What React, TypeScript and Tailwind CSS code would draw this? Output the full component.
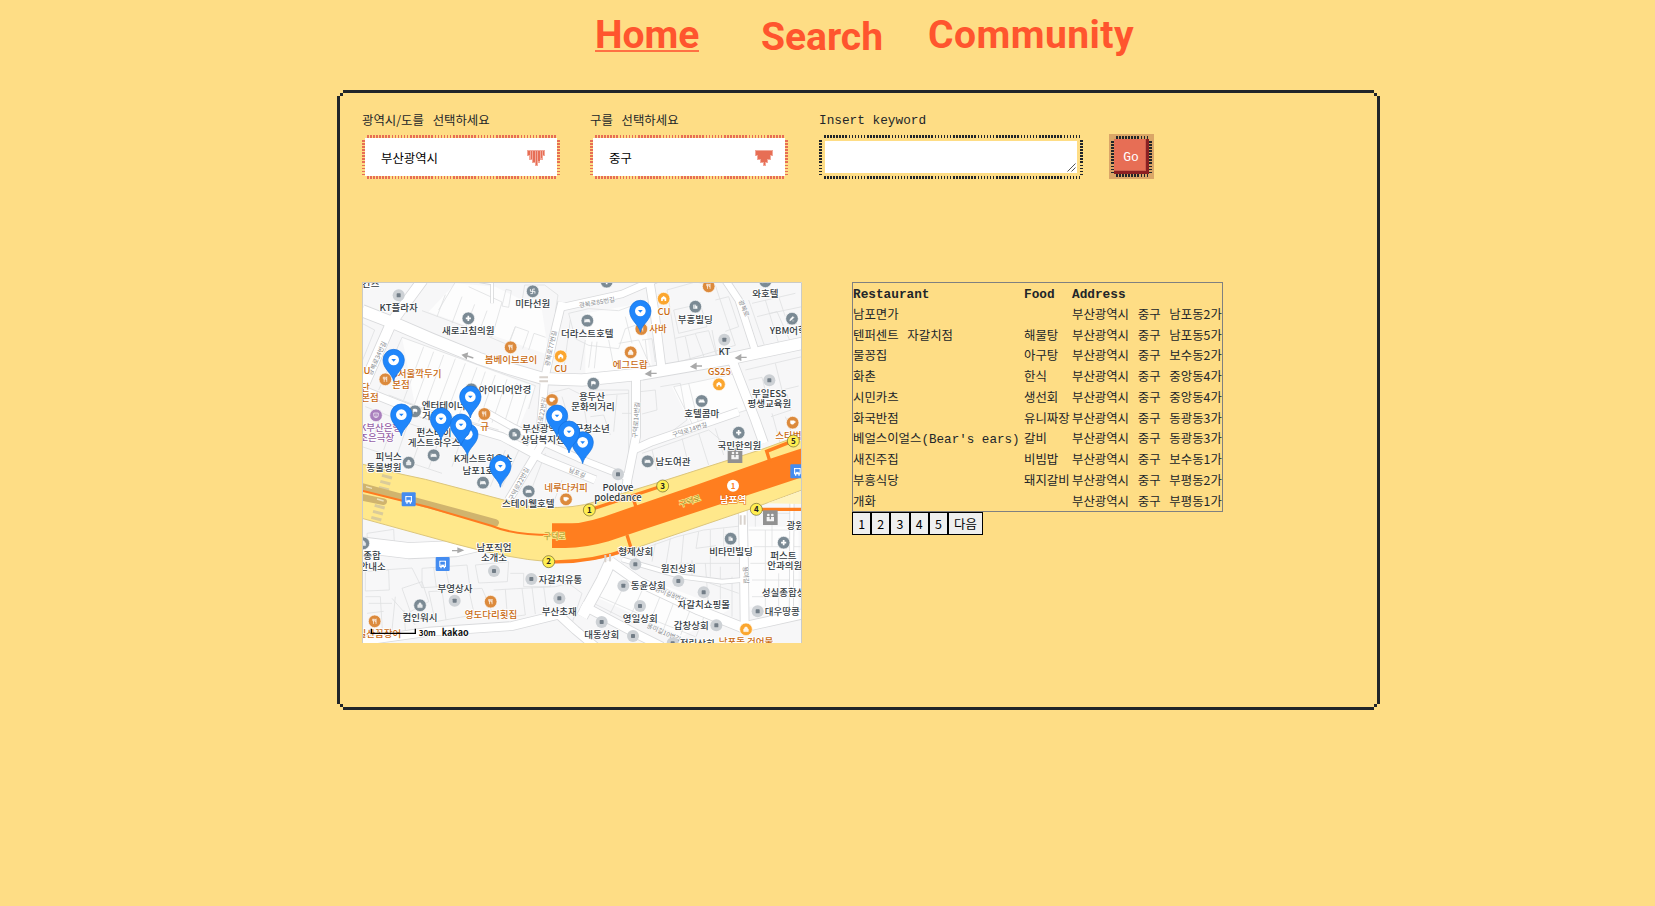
import React from "react";

const ticksX =
  "bg-[repeating-linear-gradient(90deg,currentColor_0,currentColor_1.57px,transparent_1.57px,transparent_3.071px)]";
const ticksY =
  "bg-[repeating-linear-gradient(180deg,currentColor_0,currentColor_1.57px,transparent_1.57px,transparent_3.071px)]";

function TickFrame({ className, children }: { className: string; children?: React.ReactNode }) {
  return (
    <div className={`grid grid-cols-[3px_minmax(0,1fr)_3px] grid-rows-[3px_minmax(0,1fr)_3px] ${className}`}>
      <i />
      <i className={`ml-0.5 ${ticksX}`} />
      <i />
      <i className={`mt-0.5 ${ticksY}`} />
      <div className="flex min-w-0">{children}</div>
      <i className={`mt-0.5 ${ticksY}`} />
      <i />
      <i className={`ml-0.5 ${ticksX}`} />
      <i />
    </div>
  );
}

const hangul = "font-['Noto_Sans_CJK_KR',sans-serif] font-normal text-[12.4px] [word-spacing:6px]";
const latin = "font-['Liberation_Mono','Noto_Sans_CJK_KR',monospace] text-[12.75px]";

function PixelArrow({ striped }: { striped?: boolean }) {
  return (
    <svg className="mt-0.5" width="18" height="16" viewBox="0 0 18 16" shapeRendering="crispEdges" fill="#e76e55">
      <path opacity=".6" d="M0 0h18v6h-2v4h-3v3h-2v3H8v-3H5v-3H2V6H0z" />
      {striped ? (
        <path d="M1 1h2v4H1zM4 1h1v8H4zM6 1h2v11H6zM9 1h1v14H9zM11 1h2v10h-2zM14 1h1v7h-1zM16 1h1v4h-1z" />
      ) : (
        <path d="M1 1h16v4h-2v4h-3v3h-2v3H9v-3H6V9H3V5H1z" />
      )}
    </svg>
  );
}

function Select({ label, value, striped }: { label: string; value: string; striped?: boolean }) {
  return (
    <div className="w-[198px]">
      <div className={`${hangul} h-[25px] pt-px leading-[18px] text-[#212529]`}>{label}</div>
      <TickFrame className="h-11 text-[#e76e55]">
        <div className="flex w-full items-center justify-between bg-white pr-3 pl-4">
          <span className={`${hangul} pt-0.5 text-black`}>{value}</span>
          <PixelArrow striped={striped} />
        </div>
      </TickFrame>
    </div>
  );
}

type Label = [string, number, number, string?];

const labels: Label[] = [
  ["칸즈", 26, 22], ["KT플라자", 110, 94], ["미타선원", 512, 81], ["새로고침의원", 319, 163],
  ["봄베이브로이", 447, 249, "o"], ["더라스트호텔", 676, 170], ["CU", 596, 277, "o"],
  ["S서울깍두기", 164, 292, "o"], ["본점", 117, 323, "o"], ["CU", 6, 283, "o"], ["단", 10, 333, "o"],
  ["본점", 24, 364, "o"], ["아이디어안경", 429, 339], ["엔터테이너", 245, 388], ["거리", 206, 418],
  ["K부산은행", 56, 454, "p"], ["조은극장", 44, 484, "p"], ["펀스테이", 216, 468], ["게스트하우스", 216, 498],
  ["규", 368, 449, "o"], ["부산광역시중구청소년", 612, 457], ["상담복지센터", 556, 488],
  ["피닉스", 80, 540], ["동물병원", 66, 573], ["K게스트하우스", 363, 545], ["남포1호점", 362, 581],
  ["CU", 906, 104, "o"], ["부흥빌딩", 1000, 128], ["와호텔", 1210, 50], ["YBM어학원", 1292, 163],
  ["사바", 888, 157, "o"], ["에그드랍", 805, 264, "o"], ["KT", 1087, 226], ["GS25", 1072, 284, "o"],
  ["용두산", 690, 359], ["문화의거리", 693, 389], ["부일ESS", 1222, 350], ["평생교육원", 1222, 381],
  ["호텔콤마", 1019, 411], ["국민한의원", 1132, 506], ["스타벅스", 1292, 476, "o"], ["남도여관", 933, 555],
  ["네루다커피", 612, 633, "o"], ["스테이웰호텔", 499, 682], ["Polove", 768, 632], ["poledance", 768, 664],
  ["광원", 1300, 748], ["비타민빌딩", 1107, 825], ["퍼스트", 1264, 836], ["안과의원", 1268, 867],
  ["형제상회", 821, 825], ["원진상회", 949, 875], ["동윤상회", 859, 928], ["자갈치쇼핑몰", 1025, 984],
  ["성실종합상가", 1278, 949], ["대우땅콩", 1261, 1005], ["영일상회", 835, 1027], ["갑창상회", 988, 1048],
  ["대동상회", 719, 1075], ["남포동 건어물", 1152, 1094, "o"], ["정림상회", 1006, 1101],
  ["종합", 30, 837], ["안내소", 32, 869], ["남포직업", 396, 814], ["소개소", 396, 844],
  ["자갈치유통", 595, 908], ["부영상사", 279, 936], ["부산초재", 592, 1005], ["영도다리횟집", 387, 1013, "o"],
  ["컴인워시", 174, 1024], ["일산꼼장어", 52, 1071, "o"],
];

const labelFill: Record<string, string> = { n: "#333b42", o: "#c96a12", p: "#965fa8" };

const roadNames: [string, number, number, number][] = [
  ["광복로34번길", 46, 235, -66], ["광복로77번길", 567, 205, -78], ["광복로85번길", 705, 68, -10],
  ["광복로22번길", 540, 405, -80], ["광복로", 1145, 85, 68], ["구덕로14번길", 823, 420, -86],
  ["구덕로14번길", 983, 450, -17], ["구덕로22번길", 472, 612, -62], ["남포길", 645, 579, 22],
  ["용미길", 1151, 885, 86], ["용미길8번길", 925, 945, 22], ["용미길10번길", 905, 1058, 24],
];

const dots: [number, number][] = [
  [110, 46], [1087, 179], [1222, 301], [768, 583], [396, 873], [508, 897], [278, 962], [592, 955],
  [820, 853], [949, 903], [784, 917], [1025, 937], [834, 978], [1187, 994], [719, 1026], [1063, 1036],
  [813, 1068], [932, 1090],
];

const pois: [number, number, string, string][] = [
  [512, 34, "g", "temple"], [319, 115, "g", "plus"], [446, 202, "o", "food"], [596, 229, "y", "store"],
  [70, 298, "o", "food"], [328, 328, "g", "bag"], [42, 406, "p", "mask"], [159, 394, "g", "flag"],
  [367, 402, "o", "food"], [458, 463, "g", "bldg"], [570, 360, "o", "cup"], [215, 526, "g", "bed"],
  [140, 548, "g", "bag"], [363, 608, "g", "bed"], [500, 634, "g", "bed"], [612, 658, "o", "cup"],
  [676, 122, "g", "bed"], [734, 5, "g", "plus"], [905, 56, "y", "store"], [1000, 80, "g", "bldg"], [1040, 19, "o", "food"],
  [1210, 4, "g", "bed"], [1290, 116, "g", "pen"], [838, 147, "o", "food"], [806, 217, "o", "cake"],
  [694, 311, "g", "flag"], [1071, 313, "y", "store"], [1019, 363, "g", "bed"], [1130, 458, "g", "plus"],
  [1292, 428, "o", "cup"], [857, 544, "g", "bed"], [1106, 776, "g", "bldg"], [1265, 788, "g", "plus"],
  [1152, 1048, "y", "cake"], [174, 976, "g", "bag"], [386, 965, "o", "food"], [38, 1024, "o", "food"],
  [4, 790, "g", "bag"],
];

const poiFill: Record<string, string> = { g: "#7b8a94", o: "#dc8a3c", y: "#fba62f", p: "#a97fbd" };

const glyph: Record<string, React.ReactNode> = {
  temple: <path d="M-8-8v8H8v8M8-8H0V8h-8" fill="none" stroke="#fff" strokeWidth="3" />,
  plus: <path d="M-3-9h6v6h6v6h-6v6h-6v-6h-6v-6h6z" fill="#fff" />,
  food: <path d="M-7-9v6q0 3 3 3v9M-1-9v6q0 3-3 3M-4-9v9M5 9V-9q-4 3-3 10h3" fill="none" stroke="#fff" strokeWidth="2.4" />,
  store: <path d="M-9-2 0-9 9-2V8H3V2h-6v6h-6z" fill="#fff" />,
  bag: <path d="M-8-2H8V8H-8zM-4-2v-3a4 4 0 0 1 8 0v3" fill="#fff" stroke="#fff" strokeWidth="1.5" fillOpacity=".8" />,
  mask: <path d="M-8-8H8V0q0 8-8 8T-8 0zM-4-2h2M2-2h2M-4 3h8" fill="none" stroke="#fff" strokeWidth="2.4" />,
  flag: <path d="M-6-9v18M-6-7Q0-10 7-6V2Q0-2-6 2z" fill="#fff" stroke="#fff" strokeWidth="2" />,
  bldg: <path d="M-8 8V-8H3v5h5V8zM-5-4h5M-5 0h5M-5 4h5" fill="#fff" stroke="#7b8a94" strokeWidth="1.6" />,
  cup: <path d="M-8-7H5V1q0 5-6 5t-7-5zM5-5h4v5H5" fill="#fff" stroke="#fff" strokeWidth="1.5" />,
  bed: <path d="M-9-7v14M9 7V0H-9v4H9M-6-4h4v3h-4zM-1-4h8v3h-8z" fill="#fff" stroke="#fff" strokeWidth="2" />,
  pen: <path d="M-8 8l2-7 9-9 4 4-9 9zM0 8h8" fill="#fff" stroke="#fff" strokeWidth="1.5" />,
  cake: <path d="M-8-1H8V8H-8zM-5-1v-3a5 4 0 0 1 10 0v3" fill="#fff" fillOpacity=".85" stroke="#fff" strokeWidth="2" />,
};

const roads: [string, number][] = [
  ["M0 92 110 135 210 178 350 235 450 268 545 296 660 300 840 282 1100 237 1330 188", 34],
  ["M182 0 88 128-10 350", 30],
  ["M600 66 575 170 548 296 536 440 500 520", 22],
  ["M590 84 780 42 900-10", 20],
  ["M862 0 878 100 900 276", 24],
  ["M1090 0 1130 60 1180 214", 20],
  ["M822 286 822 470 796 600 790 660", 24],
  ["M810 512 870 485 1130 395", 22],
  ["M1110 240 1180 420 1205 490", 26],
  ["M-10 325 90 365 180 400 420 470 540 535 700 600", 22],
  ["M370 395 450 440 540 485 650 535 790 590", 18],
  ["M545 485 440 660", 22],
  ["M330 0 390 10 390 70", 6],
  ["M0 795 140 812 280 806 350 790", 46],
  ["M-10 1085 200 1055 450 1038 590 1004 640 1050 700 1100", 24],
  ["M660 1010 720 900 745 845", 32],
  ["M745 845 830 905 1010 990 1140 1042 1330 1000", 28],
  ["M660 975 820 1060 900 1100", 24],
  ["M1142 690 1146 860 1148 1040", 24],
  ["M1290 660 1288 1000", 10],
  ["M780 838 960 890 1080 905 1140 900", 12],
];

const parcels =
  "M280 6 230 90M180 92 390 170 420 66 320 20M225 110l25-66M270 130l30-80M310 145l28-72M350 160l25-68M380 170l60 25 20-55M440 190l20-50 40 14-18 52M500 210l16-50 35 12M420 78l12-50 16 4-8 50zM480 65l8-50h60l40 30-8 50M0 130l38 20-38 95M120 172l400 145-20 70M120 172 50 330M185 200l-60 160M215 215l-58 160M245 225l-60 165M280 236l-62 166M310 250l-60 160M345 262l-60 160M370 275l-52 150M400 285l-50 140M435 298l-45 130M465 310l-40 125M500 320l-40 130M80 345l90 35 240 70M10 380l130 50 160 55M60 395l-30 90M100 410l-35 100M140 425l-35 100M190 440l-40 110M240 455l-40 110M300 470l-30 90M0 500l240 80M620 100l60-14 90 6 70-26 10 60-60 20-20 60-90-10-40-20zM670 180l-15 90M690 185l-10 78M705 185l-8 80M740 180l16 82M770 190l60-10 40 90M790 110l20 80M840 180l30-4 10 70M850 180l8 75M625 120l-20 150M915 30 1000 6l60 10 60 180-170 50zM940 175l60-14 30 80M970 170l15 68M1000 160l40-8 24 78M1050 150l15 80M935 90l80-18 20 68-85 20zM1060 60l40-10 30 90-40 14M1170 70 1300 40M1185 110l60-15 40 90M1160 60l50 145M1210 60l40 130M1250 50l20 60M1225 100 1320 80M680 330h120v220M660 350l140-10M685 410l40-5 20 60M765 345l-10 110M780 400h30M835 335l45-5 5 60-45 12M895 320l60-10 20 110-80 60M935 320l190-40 30 110-160 50zM980 310l30 120M840 520l200-70 60 50M870 510l15 60M960 475l20 80M1010 460l30 95M1060 445l25 80M1150 270l170-40M1160 300l40-8 15 60 60-10 12 48-60 20M1240 250l20 80 50-12M1270 410l20 50M1230 400l30 110M560 340l60-15 40 20 20 120M600 350l30 100M580 500l120 60M480 490l-60 130M430 510l-45 110M550 520l-50 130M600 600l-30 80M15 760l80-12 2 40-80 10zM60 870l90-6 30 60M10 875l70-5 2 60-72 3zM180 865l135-10 8 60-143 8zM215 862l8 60M250 860l12 60M340 855l100-10-4 60-86 4zM445 880h40v40h80l10-30M120 925l60-20 20 60-55 30zM200 935l160-10 30 70-170 30zM240 930l12 90M320 928l18 80M395 930l85-5 10 80-80 10M430 928l6 80M480 925l100-5 40-10 40 30-30 90M510 922l10 80M545 920l10 75M10 950h45l6 100M90 955l70 80M20 970l70 0M15 1000l50-6M100 950l-10 100M130 1050l-4-60M775 830l170-60 80-20 110-12M830 805l-12 40M880 790l-10 55M925 775l-15 90M965 765l-10 110M1010 755l-8 50 60-8M1045 750v140M1085 745v55h40M950 850h190M990 840v60M1030 850l8 110M1075 860v120M1110 890v120M960 880l170 60M755 860l-60 110 120 60M800 890l-55 110M850 910l-50 110M900 935l-44 110M940 955l-38 100M990 975l-34 90M1030 1000l-28 70M690 940l160 70 150 60M1160 750h160M1175 800h140M1165 850h150M1170 900h150M1170 950h150M1210 750v230M1250 880v100M1230 730v70M1180 690v50M1200 700h90";

function Badge({ x, y, n }: { x: number; y: number; n: number }) {
  return (
    <g>
      <circle cx={x} cy={y} r="18" fill="#ffee50" stroke="#6b6330" strokeWidth="2" />
      <text x={x} y={y + 8} textAnchor="middle" fontSize="24" fontWeight="700" fill="#222">{n}</text>
    </g>
  );
}

function Pin({ x, y }: { x: number; y: number }) {
  return (
    <g transform={`translate(${x} ${y})`}>
      <path d="M0 64C-4 40-32 28-32 0a32 32 0 0 1 64 0C32 28 4 40 0 64z" fill="#1f86fb" stroke="#136fdc" strokeWidth="2" />
      <circle r="16" fill="#fff" />
      <path d="M-7-3H7L0 5z" fill="#1f86fb" />
    </g>
  );
}

function Bus({ x, y }: { x: number; y: number }) {
  return (
    <g transform={`translate(${x} ${y})`}>
      <rect x="-21" y="-21" width="42" height="42" rx="3" fill="#448cf0" />
      <path d="M-10-10h20v19h-3v4H3V9h-6v4h-4V9h-3z" fill="#fff" />
      <path d="M-6-6H6v7H-6zM-7 4h3M4 4h3" stroke="#448cf0" fill="#448cf0" strokeWidth="2" />
    </g>
  );
}

function Subway({ x, y }: { x: number; y: number }) {
  return (
    <g transform={`translate(${x} ${y})`}>
      <rect x="-22" y="-22" width="44" height="44" fill="#919191" />
      <circle cx="-6" cy="-8" r="4" fill="#f4f4f4" />
      <circle cx="6" cy="-8" r="4" fill="#f4f4f4" />
      <path d="M-11-2h9v7h4v-7h9v13h-22z" fill="#f4f4f4" />
    </g>
  );
}

function MapView() {
  return (
    <svg
      width="440"
      height="361"
      viewBox="0 6 1320 1083"
      className="block shrink-0 font-['Noto_Sans_CJK_KR','Noto_Sans',sans-serif]"
    >
      <rect width="1320" height="1095" fill="#f7f7f8" />
      <path d="M200 95 390 165 560 225 540 90 400 20 280 10zM120 172l400 150-60 150-300-90zM930 320l190-40 30 110-160 50zM670 100l170-30 30 190-200 20zM1160 740h150v240h-150zM760 860l340 130-140 80-260-120z" fill="#fdfdfd" />
      <path d={parcels} fill="none" stroke="#dedfe1" strokeWidth="2.4" />
      <g fill="none" strokeLinejoin="round">
        {roads.map(([d, w], i) => <path key={i} d={d} stroke="#d9dadc" strokeWidth={w + 5} />)}
        {roads.map(([d, w], i) => <path key={i} d={d} stroke="#ffffff" strokeWidth={w} />)}
      </g>
      <path
        d="M0 552 120 583 190 598 350 640 440 664Q490 682 540 682 640 686 700 665L900 604 1200 508 1320 464V630L1180 682 780 818Q690 848 560 845 440 836 280 792L0 715z"
        fill="#ffe88b" stroke="#dcc67c" strokeWidth="3"
      />
      <path d="M1215 670 1320 632V672z" fill="#fff3bd" />
      <g stroke="#dacb9a" strokeWidth="9">
        <path d="M60 586l30 8M55 604l30 8M51 622l30 8M47 640l30 8M43 658l30 8M38 676l30 8M33 694l30 8M28 712l30 8" />
      </g>
      <path d="M0 620 400 728" stroke="#d0b46e" strokeWidth="22" strokeLinecap="round" />
      <path d="M0 652 65 665" stroke="#d0b46e" strokeWidth="20" strokeLinecap="round" />
      <path d="M0 632 200 682 390 738Q450 764 570 765" fill="none" stroke="#ff7a20" strokeWidth="6" />
      <path d="M570 730H630Q680 728 760 698L1000 616 1220 538 1320 505V592L840 750 740 784Q670 804 610 804H570z" fill="#ff7e1f" />
      <g fill="none" stroke="#ff7e1f" strokeWidth="10">
        <path d="M1280 488 1214 514 1224 545M682 690 900 618M810 645l12 36M795 765l13 42M560 845Q680 850 808 805M1183 688h137" />
      </g>
      <g stroke="#a9a9a9" fill="#a9a9a9" strokeWidth="4">
        <path d="M338 234 320 228M320 220l-14 5 11 10zM274 812h20M292 805l14 6-14 6zM888 280h-20M870 273l-14 9 14 6zM1024 258h-20M1006 251l-14 9 14 6zM1158 232h-20M1140 225l-14 9 14 6z" transform="translate(-4 0)" />
        <path d="M30 625 12 620M45 657l20 6" stroke="#eee2bb" />
      </g>
      <path d="M532 292h26M532 304h26M1136 706v28M1148 706v28M730 825v22M744 822v22" stroke="#d9d2cc" strokeWidth="6" />
      <g fontSize="19" fill="#85888c" textAnchor="middle">
        {roadNames.map(([t, x, y, r], i) => (
          <text key={i} transform={`translate(${x} ${y}) rotate(${r})`} y="6" stroke="#fff" strokeWidth="3" paintOrder="stroke">{t}</text>
        ))}
      </g>
      {dots.map(([x, y], i) => (
        <g key={i}>
          <circle cx={x} cy={y} r="18" fill="#cdd1d5" />
          <rect x={x - 6} y={y - 6} width="12" height="12" rx="2" fill="#727d87" />
        </g>
      ))}
      {pois.map(([x, y, c, g], i) => (
        <g key={i} transform={`translate(${x} ${y})`}>
          <circle r="19" fill={poiFill[c]} stroke="#fff" strokeWidth="2" />
          <g transform="scale(.85)">{glyph[g]}</g>
        </g>
      ))}
      <Subway x={1119} y={527} />
      <g textAnchor="middle" fontSize="28.5" fontWeight="500" stroke="#fff" strokeWidth="5" strokeLinejoin="round" paintOrder="stroke">
        {labels.map(([t, x, y, c], i) => (
          <text key={i} x={x} y={y} fill={labelFill[c ?? "n"]}>{t}</text>
        ))}
      </g>
      <g textAnchor="middle" fontSize="24" fill="#a48d21" stroke="#ffe88b" strokeWidth="4" paintOrder="stroke">
        <text x="578" y="777">구덕로</text>
        <text transform="translate(984 664) rotate(-18)" y="8">구덕로</text>
      </g>
      <circle cx="1113" cy="617" r="18" fill="#fff" />
      <text x="1113" y="626" textAnchor="middle" fontSize="24" fontWeight="700" fill="#ff7e1f">1</text>
      <text x="1113" y="669" textAnchor="middle" fontSize="29" fontWeight="700" fill="#fff" stroke="#e8650c" strokeWidth="3" paintOrder="stroke">남포역</text>
      <Subway x={1225} y={713} />
      <Bus x={140} y={658} />
      <Bus x={242} y={852} />
      <Bus x={1306} y={574} />
      <Badge x={682} y={690} n={1} />
      <Badge x={560} y={845} n={2} />
      <Badge x={902} y={618} n={3} />
      <Badge x={1183} y={688} n={4} />
      <Badge x={1294} y={483} n={5} />
      <Pin x={835} y={93} />
      <Pin x={95} y={240} />
      <Pin x={325} y={350} />
      <Pin x={118} y={404} />
      <Pin x={316} y={463} />
      <Pin x={237} y={416} />
      <Pin x={297} y={434} />
      <Pin x={585} y={407} />
      <Pin x={662} y={487} />
      <Pin x={621} y={455} />
      <Pin x={415} y={558} />
      <path d="M28 1046v14h132v-14" fill="none" stroke="#000" strokeWidth="4" />
      <text x="170" y="1068" fontSize="24" fontWeight="700" fill="#111" stroke="#fff" strokeWidth="4" paintOrder="stroke">30m</text>
      <text x="239" y="1068" fontSize="27" fontWeight="700" fill="#111" stroke="#fff" strokeWidth="4" paintOrder="stroke">kakao</text>
      <path d="M1.5 1089V7.5H1318.5V1089" fill="none" stroke="#cbcbc6" strokeWidth="3" />
    </svg>
  );
}

const rows: [string, string, string][] = [
  ["남포면가", "", "부산광역시 중구 남포동2가"],
  ["텐퍼센트 자갈치점", "해물탕", "부산광역시 중구 남포동5가"],
  ["물꽁집", "아구탕", "부산광역시 중구 보수동2가"],
  ["화촌", "한식", "부산광역시 중구 중앙동4가"],
  ["시민카츠", "생선회", "부산광역시 중구 중앙동4가"],
  ["화국반점", "유니짜장", "부산광역시 중구 동광동3가"],
  ["베얼스이얼스(Bear's ears)", "갈비", "부산광역시 중구 동광동3가"],
  ["새진주집", "비빔밥", "부산광역시 중구 보수동1가"],
  ["부흥식당", "돼지갈비", "부산광역시 중구 부평동2가"],
  ["개화", "", "부산광역시 중구 부평동1가"],
];

const rowGrid = "grid h-[20.75px] grid-cols-[171px_48px_1fr] items-center whitespace-nowrap";

/* Hangul keeps its own advance; a trailing Latin part is set in the monospace face. */
function Name({ text }: { text: string }) {
  const at = text.indexOf("(");
  if (at < 0) return <span>{text}</span>;
  return (
    <span>
      {text.slice(0, at)}
      <span className="font-['Liberation_Mono',monospace] text-[12.6px] leading-none [word-spacing:0px]">{text.slice(at)}</span>
    </span>
  );
}

export default function App() {
  return (
    <div className="flex min-h-screen flex-col overflow-hidden bg-[#fedd85]">
      <nav className="flex h-[90px] shrink-0 items-start pl-[595px] font-['Roboto',sans-serif] text-[39px] leading-[46px] font-bold text-[#ff552e]">
        <a className="mt-[12px] h-[40px] w-[104px] border-b-2 border-[#ff7043] whitespace-nowrap">Home</a>
        <a className="mt-[14px] ml-[62px] w-[120px]">Search</a>
        <a className="mt-[12px] ml-[47px] tracking-[0.45px]">Community</a>
      </nav>

      <main className="ml-[337px] grid h-[620px] w-[1043px] grid-cols-[3px_3px_minmax(0,1fr)_3px_3px] grid-rows-[3px_3px_minmax(0,1fr)_3px_3px]">
        <i className="col-start-3 row-start-1 bg-[#212529]" />
        <i className="col-start-2 row-start-2 bg-[#212529]" />
        <i className="col-start-4 row-start-2 bg-[#212529]" />
        <i className="col-start-1 row-start-3 bg-[#212529]" />
        <i className="col-start-5 row-start-3 bg-[#212529]" />
        <i className="col-start-2 row-start-4 bg-[#212529]" />
        <i className="col-start-4 row-start-4 bg-[#212529]" />
        <i className="col-start-3 row-start-5 bg-[#212529]" />

        <div className="col-start-3 row-start-3 pt-[14px] pl-[19px]">
          <div className="flex h-[172px] items-start">
            <Select label="광역시/도를 선택하세요" value="부산광역시" striped />
            <div className="w-[30px]" />
            <Select label="구를 선택하세요" value="중구" />
            <div className="ml-[31px] w-[264px]">
              <div className={`${latin} h-[25px] pt-0.5 leading-[18px] text-[#212529]`}>Insert keyword</div>
              <TickFrame className="h-11 text-[#212529]">
                <div className="m-[3px] flex flex-1 items-end justify-end bg-white p-px">
                  <svg width="9" height="9" viewBox="0 0 9 9" stroke="#555" strokeWidth="1">
                    <path d="M.5 8.5l8-8M4.5 8.5l4-4" />
                  </svg>
                </div>
              </TickFrame>
            </div>
            <button className="mt-6 ml-[26px] h-[45px] w-[45px] bg-[#dba667] p-0.5">
              <TickFrame className="h-[41px] w-[41px] text-[#212529]">
                <span className="flex flex-1 items-center justify-center border-r-[3px] border-b-[3px] border-[#8c2022] bg-[#e76e55] pt-1.5 pl-0.5 font-['Liberation_Mono',monospace] text-[13px] text-white shadow-[inset_-1px_-1px_0_#ce5f4c]">
                  Go
                </span>
              </TickFrame>
            </button>
          </div>

          <div className="flex items-start">
            <MapView />
            <section className="ml-[50px] text-[#212529]">
              <div className="h-[230px] w-[371px] border border-[#808080]">
                <div className={`${rowGrid} ${latin} pt-0.5 font-bold`}>
                  <span>Restaurant</span>
                  <span>Food</span>
                  <span>Address</span>
                </div>
                {rows.map(([name, food, address]) => (
                  <div key={name} className={`${rowGrid} ${hangul}`}>
                    <Name text={name} />
                    <span>{food}</span>
                    <span>{address}</span>
                  </div>
                ))}
              </div>
              <div className="flex">
                {["1", "2", "3", "4", "5", "다음"].map((p) => (
                  <button
                    key={p}
                    className={`${hangul} flex h-[23px] items-center justify-center border border-r-[1.5px] border-black bg-[#efefef] pt-0.5 text-black ${p === "다음" ? "w-[35px]" : "w-[19.2px]"}`}
                  >
                    {p}
                  </button>
                ))}
              </div>
            </section>
          </div>
        </div>
      </main>
    </div>
  );
}
